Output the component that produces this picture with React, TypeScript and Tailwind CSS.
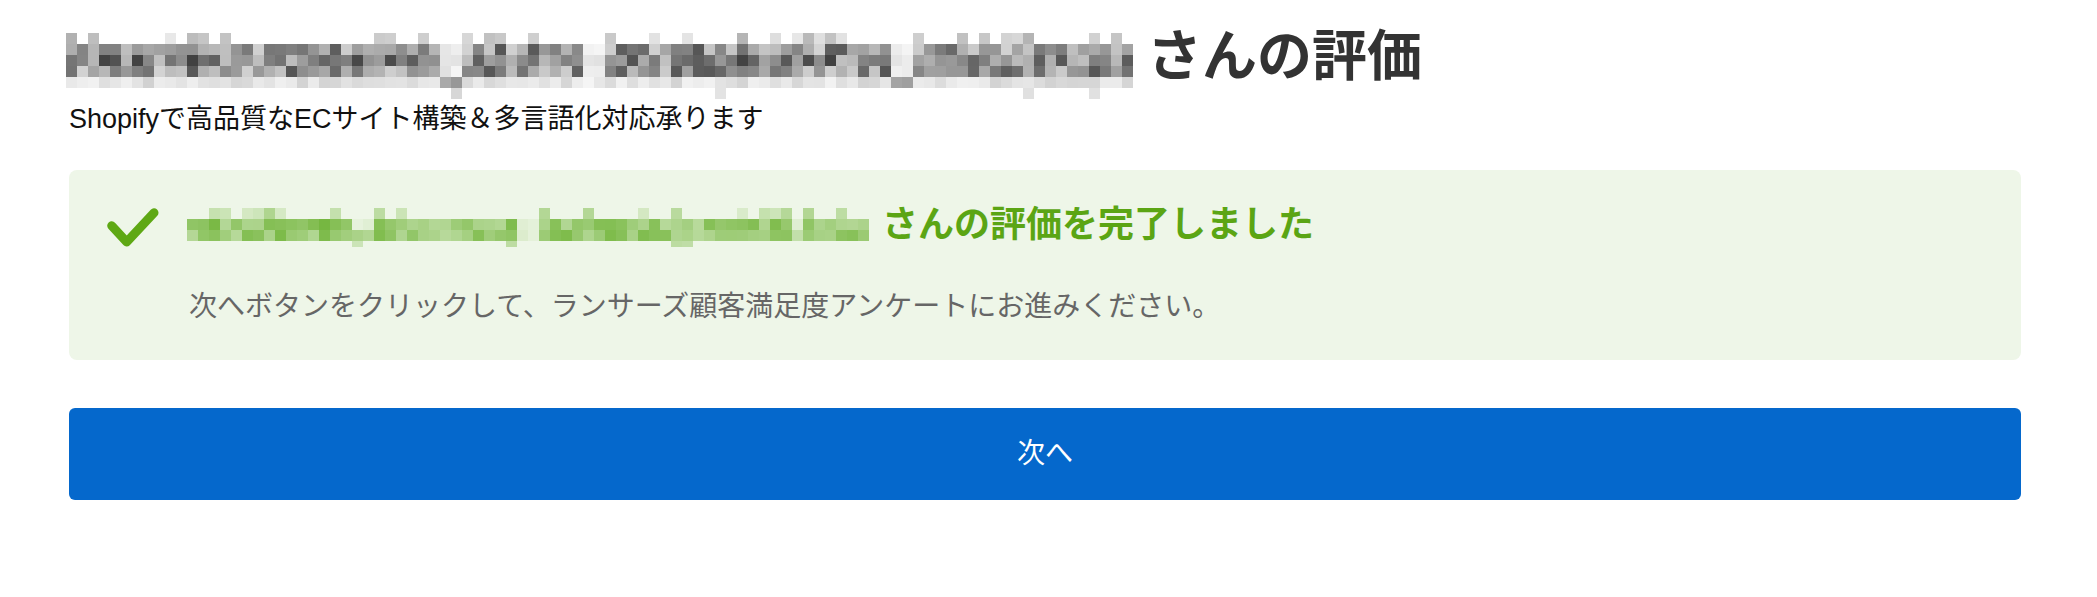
import React from "react";

// seeded random so the mosaic is stable between renders
function rng(seed: number) {
  let s = seed >>> 0;
  return () => {
    s = (s + 0x6d2b79f5) >>> 0;
    let t = s;
    t = Math.imul(t ^ (t >>> 15), t | 1);
    t ^= t + Math.imul(t ^ (t >>> 7), t | 61);
    return ((t ^ (t >>> 14)) >>> 0) / 4294967296;
  };
}

function mix(a: number[], b: number[], t: number) {
  const c = a.map((v, i) => Math.round(v + (b[i] - v) * t));
  return `rgb(${c[0]},${c[1]},${c[2]})`;
}

type Row = [number, number, number]; // probability, tMin, tMax

type MosaicProps = {
  cols: number;
  height: number;
  seed: number;
  dark: number[];
  light: number[];
  rows: Row[];
  gaps: number[];
  unders: number[];
  className?: string;
};

function Mosaic({ cols, height, seed, dark, light, rows, gaps, unders, className }: MosaicProps) {
  const r = rng(seed);
  const cells: React.ReactNode[] = [];
  for (let c = 0; c < cols; c++) {
    rows.forEach(([p, lo, hi], ri) => {
      let prob = p;
      let a = lo;
      let b = hi;
      const last = ri === rows.length - 1;
      if (gaps.includes(c)) {
        if (ri === 0 || last) prob = 0;
        a = 0.86;
        b = 0.97;
      } else if (unders.includes(c)) {
        if (ri === 0) prob = 0;
        else if (ri < rows.length - 2) {
          a = 0.86;
          b = 0.97;
        } else if (ri === rows.length - 2) {
          a = 0.45;
          b = 0.7;
        } else {
          prob = 0.6;
          a = 0.7;
          b = 0.85;
        }
      }
      const roll = r();
      const t = a + (b - a) * r();
      if (roll < prob) {
        cells.push(<rect key={`${c}-${ri}`} x={c * 11} y={ri * 11} width={11} height={11} fill={mix(dark, light, t)} />);
      }
    });
  }
  return (
    <svg width={cols * 11} height={height} className={className} shapeRendering="crispEdges" aria-hidden="true">
      {cells}
    </svg>
  );
}

export default function App() {
  return (
    <div className="min-h-[597px] bg-white font-['Liberation_Sans','Noto_Sans_CJK_JP',sans-serif]">
      <div className="ml-[69px] w-[1952px] pt-[29px]">
        <h1 className="flex h-[55px] items-start text-[55px] font-bold leading-[55px] text-[#333]">
          <Mosaic
            cols={97}
            height={66}
            seed={7}
            dark={[55, 55, 55]}
            light={[252, 252, 252]}
            rows={[
              [0.3, 0.6, 0.9],
              [1, 0.15, 0.8],
              [1, 0.05, 0.7],
              [1, 0.15, 0.8],
              [1, 0.78, 0.95],
              [0.05, 0.85, 0.95],
            ]}
            gaps={[47, 48]}
            unders={[34, 35, 75, 76]}
            className="-ml-[3px] mt-[4px] shrink-0"
          />
          <span className="ml-[14px] whitespace-nowrap">さんの評価</span>
        </h1>
        <p className="mt-[15px] text-[27px] leading-[40px] text-[#111]">
          Shopifyで高品質なECサイト構築＆多言語化対応承ります
        </p>

        <div className="mt-[31px] rounded-[8px] bg-[#eef6e8] pb-[39px] pl-[36px] pt-[35px]">
          <div className="flex items-start">
            <svg width="55" height="45" viewBox="0 0 55 45" className="shrink-0" aria-hidden="true">
              <polyline
                points="6.7,20.7 21.7,37 49,7.7"
                fill="none"
                stroke="#5ea814"
                strokeWidth="9"
                strokeLinecap="round"
                strokeLinejoin="round"
              />
            </svg>
            <Mosaic
              cols={62}
              height={39}
              seed={21}
              dark={[112, 180, 56]}
              light={[236, 245, 228]}
              rows={[
                [0.35, 0.5, 0.85],
                [1, 0.05, 0.6],
                [1, 0.1, 0.6],
                [0.08, 0.6, 0.85],
              ]}
              gaps={[30, 31]}
              unders={[15, 16, 55]}
              className="ml-[27px] mt-[3px] shrink-0"
            />
            <span className="ml-[13px] mt-[2px] whitespace-nowrap text-[36px] font-bold leading-[36px] text-[#5ba514]">
              さんの評価を完了しました
            </span>
          </div>
          <p className="ml-[84px] mt-[43px] text-[28px] leading-[28px] text-[#666]">
            次へボタンをクリックして、ランサーズ顧客満足度アンケートにお進みください。
          </p>
        </div>

        <button className="mt-[48px] flex h-[92px] w-full items-center justify-center rounded-[6px] bg-[#0568cc] text-[28px] text-white">
          次へ
        </button>
      </div>
    </div>
  );
}
